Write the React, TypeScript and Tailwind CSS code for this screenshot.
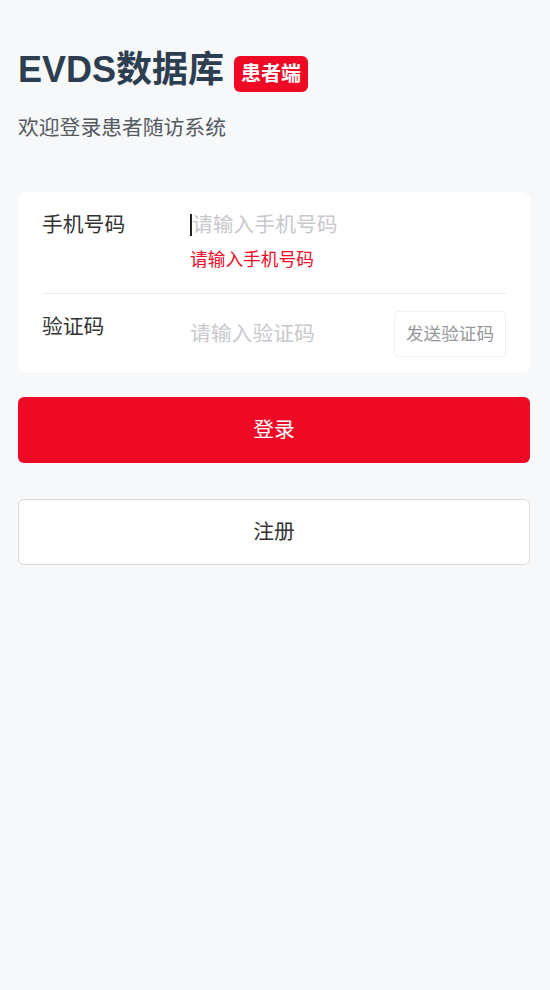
import React from "react";

const font = { fontFamily: '"Liberation Sans", "Noto Sans CJK SC", sans-serif' };

export default function App() {
  return (
    <div
      className="min-h-screen bg-[#f7f8fa] pl-[18px] pr-[20px] pt-[48px]"
      style={font}
    >
      <div className="flex h-[44px] items-end gap-[10px]">
        <h1 className="text-[36px] font-bold leading-[44px] text-[#2c3e50]">EVDS数据库</h1>
        <span className="flex h-[36px] items-center rounded-[6px] bg-[#ee0a24] px-[7px] text-[20px] font-bold leading-none text-white">
          患者端
        </span>
      </div>
      <p className="mt-[22px] text-[20.8px] leading-[28px] text-[#555a61]">欢迎登录患者随访系统</p>

      <div className="mt-[50px] rounded-[8px] bg-white px-[24px]">
        <div className="flex border-b border-[#ebedf0] pt-[21px] pb-[22px]">
          <div className="w-[148px] text-[20.8px] leading-[24px] text-[#323233]">手机号码</div>
          <div className="flex-1">
            <div className="flex h-[24px] items-center text-[20.8px] leading-[24px] text-[#c8c9cc]">
              <span className="h-[22px] w-[2px] bg-[#222]" />
              请输入手机号码
            </div>
            <div className="mt-[12px] text-[17.7px] leading-[22px] text-[#ee0a24]">请输入手机号码</div>
          </div>
        </div>
        <div className="flex items-start pt-[17px] pb-[15px]">
          <div className="mt-[4px] w-[148px] text-[20.8px] leading-[24px] text-[#323233]">验证码</div>
          <div className="flex h-[46px] flex-1 items-center text-[20.8px] leading-[24px] text-[#c8c9cc]">
            请输入验证码
          </div>
          <div className="flex h-[46px] w-[112px] items-center justify-center rounded-[4px] border border-[#f0f1f3] text-[17.6px] text-[#969799]">
            发送验证码
          </div>
        </div>
      </div>

      <button className="mt-[25px] flex h-[66px] w-full items-center justify-center rounded-[6px] bg-[#ee0a24] text-[20.8px] text-white">
        登录
      </button>
      <button className="mt-[36px] flex h-[66px] w-full items-center justify-center rounded-[6px] border border-[#dcdee0] bg-white text-[20.8px] text-[#323233]">
        注册
      </button>
    </div>
  );
}
